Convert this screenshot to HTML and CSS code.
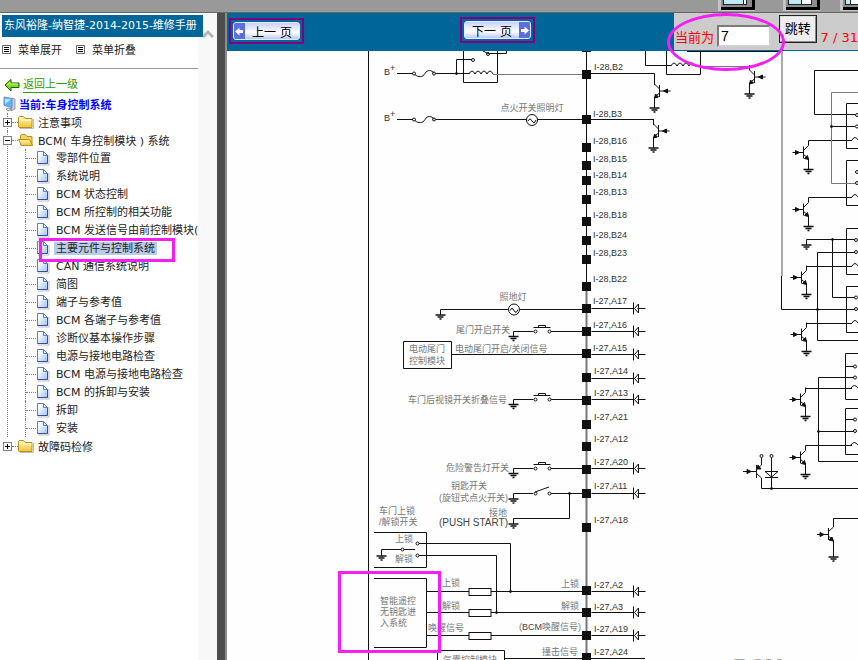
FILE: index.html
```html
<!DOCTYPE html>
<html lang="zh-CN">
<head>
  <meta charset="UTF-8" />
  <meta name="viewport" content="width=device-width, initial-scale=1.0"/>
  <title>东风裕隆-纳智捷-2014-2015-维修手册</title>
  <link rel="stylesheet" href="styles.css">
</head>
<body>
  <!-- shared icons -->
  <svg class="defs" width="0" height="0" aria-hidden="true">
    <defs>
      <linearGradient id="gDoc" x1="0" y1="0" x2="1" y2="1">
        <stop offset="0.2" stop-color="#ffffff"/><stop offset="1" stop-color="#9cc2f2"/>
      </linearGradient>
      <linearGradient id="gFolder" x1="0" y1="0" x2="0" y2="1">
        <stop offset="0" stop-color="#fff6b0"/><stop offset="1" stop-color="#efc43c"/>
      </linearGradient>
      <symbol id="doc" viewBox="0 0 14 16">
        <path d="M2 15h11V5" fill="none" stroke="#b9b9c6"/>
        <path d="M1.500 1.500h6l4 4v8h-10z" fill="url(#gDoc)" stroke="#5a7fc0"/>
        <path d="M11.500 5.500v8h-10" fill="none" stroke="#3c4f96"/>
        <path d="M7.500 1.500v4h4z" fill="#dbe9fb" stroke="#5a7fc0"/>
      </symbol>
      <symbol id="folder" viewBox="0 0 16 14">
        <path d="M2 13.500h13.500V4" fill="none" stroke="#bbb"/>
        <path d="M.5 12V2.500l1-1h4l1.500 2h7v9h-13z" fill="url(#gFolder)" stroke="#b8901c"/>
        <path d="M1.500 5h12" stroke="#fffbe0"/>
      </symbol>
      <symbol id="folderOpen" viewBox="0 0 16 14">
        <path d="M2.500 12V2.500l1-1h4l1.500 2h5v9" fill="#f3d566" stroke="#b8901c"/>
        <path d="M.5 6.500h11l3 6h-11z" fill="url(#gFolder)" stroke="#b8901c"/>
      </symbol>
      <symbol id="list" viewBox="0 0 9 9">
        <path d="M.5.5h8v8h-8z" fill="#fff" stroke="#666"/>
        <path d="M2 2.500h5M2 4.500h5M2 6.500h5" stroke="#000"/>
      </symbol>
    </defs>
  </svg>

  <div class="topbar">
    <svg width="140" height="11" aria-hidden="true">
      <path d="M0 0h37v11H0zM65 0h37v11H65zM122 0h18v11h-18z" fill="#c4c4c4"/>
      <path d="M3 10h34V0h-3v7H3zM68 10h34V0h-3v7H68zM125 10h15V7h-15z" fill="#000"/>
      <path d="M3 0h31v7H3zM68 0h31v7H68zM125 0h15v7h-15z" fill="#8c8c8c"/>
      <path d="M5 0h24v5H5zM70 0h24v5H70zM127 0h13v5h-13z" fill="#222"/>
      <path d="M6 0h19v4H6zM71 0h12v4H71zM128 0h4v4h-4z" fill="#bfeaf5"/>
      <path d="M26 0h2v4h-2zM84 0h9v4h-9zM133 0h7v4h-7z" fill="#fff"/>
    </svg>
  </div>

  <div class="frames">
    <aside class="sidebar">
      <div class="contents">
        <h1>东风裕隆-纳智捷-2014-2015-维修手册</h1>
        <div class="menu">
          <button type="button"><svg width="9" height="9"><use href="#list"/></svg>菜单展开</button>
          <button type="button"><svg width="9" height="9"><use href="#list"/></svg>菜单折叠</button>
        </div>
        <div class="back">
          <svg width="16" height="14" viewBox="0 0 16 14" aria-hidden="true">
            <path d="M1 7l6-5.500v3.500h8v4.500H7V13z" fill="#7ddc1e" stroke="#1b5a0c"/>
            <path d="M3 7l3-2.500V6h8" fill="none" stroke="#e4f96a"/>
          </svg>
          <a href="#up">返回上一级</a>
        </div>
        <div class="current">
          <svg width="13" height="16" viewBox="0 0 13 16" aria-hidden="true">
            <path d="M9 2l3 1v10l-4 2z" fill="#c9ccd6" stroke="#9aa0b2"/>
            <path d="M1 1l8 1.500v9L1 9.500z" fill="#58b4f5" stroke="#6a8fd0"/>
            <path d="M2 2.500l6 1L2 8z" fill="#b9e4ff"/>
            <path d="M3 13l3-1 3 1-4 2z" fill="#dfe2ea" stroke="#8a90a2"/>
          </svg>
          当前:车身控制系统
        </div>

        <ul class="tree">
          <li>
            <div class="row"><button type="button" class="toggle plus" aria-label="展开"></button><svg width="16" height="14"><use href="#folder"/></svg><a href="#n1">注意事项</a></div>
          </li>
          <li>
            <div class="row"><button type="button" class="toggle" aria-label="折叠"></button><svg width="16" height="14"><use href="#folderOpen"/></svg><a href="#n2">BCM( 车身控制模块 ) 系统</a></div>
            <ul>
              <li><svg width="14" height="16"><use href="#doc"/></svg><a href="#p1">零部件位置</a></li>
              <li><svg width="14" height="16"><use href="#doc"/></svg><a href="#p2">系统说明</a></li>
              <li><svg width="14" height="16"><use href="#doc"/></svg><a href="#p3">BCM 状态控制</a></li>
              <li><svg width="14" height="16"><use href="#doc"/></svg><a href="#p4">BCM 所控制的相关功能</a></li>
              <li><svg width="14" height="16"><use href="#doc"/></svg><a href="#p5">BCM 发送信号由前控制模块(</a></li>
              <li class="marked"><svg width="14" height="16"><use href="#doc"/></svg><a href="#p6" class="selected">主要元件与控制系统</a></li>
              <li><svg width="14" height="16"><use href="#doc"/></svg><a href="#p7">CAN 通信系统说明</a></li>
              <li><svg width="14" height="16"><use href="#doc"/></svg><a href="#p8">简图</a></li>
              <li><svg width="14" height="16"><use href="#doc"/></svg><a href="#p9">端子与参考值</a></li>
              <li><svg width="14" height="16"><use href="#doc"/></svg><a href="#p10">BCM 各端子与参考值</a></li>
              <li><svg width="14" height="16"><use href="#doc"/></svg><a href="#p11">诊断仪基本操作步骤</a></li>
              <li><svg width="14" height="16"><use href="#doc"/></svg><a href="#p12">电源与接地电路检查</a></li>
              <li><svg width="14" height="16"><use href="#doc"/></svg><a href="#p13">BCM 电源与接地电路检查</a></li>
              <li><svg width="14" height="16"><use href="#doc"/></svg><a href="#p14">BCM 的拆卸与安装</a></li>
              <li><svg width="14" height="16"><use href="#doc"/></svg><a href="#p15">拆卸</a></li>
              <li><svg width="14" height="16"><use href="#doc"/></svg><a href="#p16">安装</a></li>
            </ul>
          </li>
          <li>
            <div class="row"><button type="button" class="toggle plus" aria-label="展开"></button><svg width="16" height="14"><use href="#folder"/></svg><a href="#n3">故障码检修</a></div>
          </li>
        </ul>
      </div>
      <div class="scroll">
        <svg width="12" height="10" viewBox="0 0 12 10" aria-hidden="true"><path d="M1 8l5-5 5 5" fill="none" stroke="#b4b4b4" stroke-width="3"/></svg>
      </div>
    </aside>

    <div class="divider"></div>

    <main class="viewer">
      <div class="toolbar">
        <div><button type="button" class="page prev"><span class="face"><svg width="11" height="17" viewBox="0 0 11 17" aria-hidden="true"><path d="M0 0h11v17H0z" fill="#5b6fe0"/><path d="M1 8.500l4.500-4v2.500H9v3H5.500v2.500z" fill="#fff"/></svg><span>上一 页</span></span></button></div>
        <div><button type="button" class="page next"><span class="face"><span>下一 页</span><svg width="11" height="17" viewBox="0 0 11 17" aria-hidden="true"><path d="M0 0h11v17H0z" fill="#5b6fe0"/><path d="M10 8.500l-4.500-4v2.500H2v3h3.500v2.500z" fill="#fff"/></svg></span></button></div>
        <form class="jump">
          <label for="pageNo">当前为</label>
          <input type="text" id="pageNo" value="7">
          <button type="button">跳转</button>
          <span class="count">7 / 31</span>
          <span class="circle"></span>
        </form>
      </div>

      <div class="sheet">
        <svg class="diagram" width="631" height="609" viewBox="227 51 631 609" role="img" aria-label="BCM 电路图">
          <defs>
            <rect id="pin" x="-5" y="-5" width="9" height="9" fill="#111" stroke="none"/>
            <g id="gnd"><path d="M-5 0H5M-3 2H3M-1 4H1" stroke-width="1.500"/></g>
            <g id="diode">
              <path d="M5 0H47M51 0H59M47-6V6M52-4.500L48 0l4 4.500z"/>
            </g>
            <!-- base on the left, emitter to ground -->
            <g id="npn">
              <path d="M-11 0H0M0-6V6M0-2L5-7V-12M0 2L5 6V17"/>
              <path d="M-4 0l-4-2v4zM5 7L1 6l3-3z" fill="#111"/>
              <use href="#gnd" x="5" y="17"/>
            </g>
            <g id="fuse">
              <path d="M0 0H16M39 0H57M18 1c3 3 8 3 10-1s7-4 9 0"/>
              <circle cx="17" cy="0" r="1.500"/><circle cx="37" cy="0" r="1.500"/>
            </g>
            <g id="coil"><path d="M0 0q3-6 6 0q3-6 6 0q3-6 6 0q3-6 6 0"/></g>
            <g id="lamp"><circle cx="0" cy="0" r="5.500" fill="#fff"/><path d="M-4 1q2-4 4 0t4-1"/></g>
            <!-- push switch between ground and pin -->
            <g id="push">
              <path d="M0 5V0H20M37 0H69M20-4H37M25-4V-6H32V-4"/>
              <circle cx="22" cy="0" r="1.500" fill="#fff"/><circle cx="36" cy="0" r="1.500" fill="#fff"/>
              <use href="#gnd" x="0" y="5"/>
            </g>
            <g id="resistor"><path d="M0 0H155"/><rect x="42" y="-3" width="22" height="7" fill="#fff"/></g>
          </defs>

          <!-- bus and frame -->
          <g class="wire">
            <path d="M368.500 51V660M586.500 51V290"/>
            <path class="soft" d="M586.500 290V660" stroke-width="2"/>
          </g>

          <!-- power supply -->
          <g class="wire">
            <use href="#fuse" x="397" y="73.500"/>
            <path d="M453 73.500H469M456.500 73V59.500H472M463.500 51V82.500H497.500V51M483 51L488 53.500H506.500V51"/>
            <circle cx="456.500" cy="73.500" r="1" fill="#111"/>
            <circle cx="473" cy="60" r="1.500"/><circle cx="488" cy="54" r="1.500"/>
            <use href="#coil" x="469" y="74"/>
            <path class="soft" d="M493 74.500H582"/>
            <use href="#fuse" x="397" y="119.500"/>
            <path d="M453 119.500H582"/>
            <use href="#lamp" x="532" y="120"/>
            <path d="M591 73.500H654.500V85M591 119.500H653.500V125"/>
            <use href="#npn" transform="translate(659.500 91) scale(-1 1)"/>
            <use href="#npn" transform="translate(658.500 131) scale(-1 1)"/>
            <path d="M645.500 51V65.500H671M666.500 51V74.500H700.500V51M687 51.500H782"/>
            <use href="#coil" x="671" y="66"/>
            <path class="soft" d="M695 66.500H749.500"/>
            <use href="#npn" transform="translate(754.500 77) scale(-1 1)"/>
            <path class="pale" d="M782 51V276" stroke-width="2"/>
            <path d="M781.500 276V309.500H855"/>
          </g>

          <!-- left side switches -->
          <g class="wire">
            <path d="M440.500 315V309.500H582"/><use href="#gnd" x="440.500" y="315"/><use href="#lamp" x="514" y="309.500"/>
            <use href="#push" x="513.500" y="331.500"/>
            <path d="M403.500 341.500H451.500V368.500H403.500zM452 354.500H582"/>
            <use href="#push" x="513.500" y="399.500"/>
            <use href="#push" x="513.500" y="468.500"/>
            <path d="M513.500 499V493.500H533M535 492L549 487M551 493.500H582M513.500 524V518.500H569.500V493"/>
            <circle cx="535.500" cy="493.500" r="1.500"/><circle cx="549.500" cy="493.500" r="1.500"/>
            <circle cx="569.500" cy="493.500" r="1" fill="#111"/>
            <use href="#gnd" x="513.500" y="499"/><use href="#gnd" x="513.500" y="524"/>
            <path d="M374 532.500H426.500V567.500H374M381.500 556V549.500H415M419 543.500H510.500V591M419 555.500H496.500V612"/>
            <circle cx="417.500" cy="543.500" r="1.500"/><circle cx="402.500" cy="549.500" r="1.500" fill="#fff"/><circle cx="417.500" cy="555.500" r="1.500"/>
            <use href="#gnd" x="381.500" y="556"/>
            <path d="M374 578.500H426.500V647.500H374"/>
            <use href="#resistor" x="427" y="591.500"/>
            <use href="#resistor" x="427" y="612.500"/>
            <use href="#resistor" x="427" y="635.500"/>
            <circle cx="510.500" cy="591.500" r="1" fill="#111"/><circle cx="496.500" cy="612.500" r="1" fill="#111"/>
            <path d="M437.500 660V650.500H504.500V660M505 658.500H645"/>
          </g>

          <!-- pins -->
          <g>
            <use href="#pin" x="587" y="48"/><use href="#pin" x="587" y="75"/><use href="#pin" x="587" y="120"/>
            <use href="#pin" x="587" y="148"/><use href="#pin" x="587" y="166"/><use href="#pin" x="587" y="181"/>
            <use href="#pin" x="587" y="200"/><use href="#pin" x="587" y="222"/><use href="#pin" x="587" y="241"/>
            <use href="#pin" x="587" y="260"/><use href="#pin" x="587" y="287"/><use href="#pin" x="587" y="309"/>
            <use href="#pin" x="587" y="332"/><use href="#pin" x="587" y="354"/><use href="#pin" x="587" y="378"/>
            <use href="#pin" x="587" y="401"/><use href="#pin" x="587" y="425"/><use href="#pin" x="587" y="447"/>
            <use href="#pin" x="587" y="470"/><use href="#pin" x="587" y="494"/><use href="#pin" x="587" y="528"/>
            <use href="#pin" x="587" y="591"/><use href="#pin" x="587" y="613"/><use href="#pin" x="587" y="636"/>
            <use href="#pin" x="587" y="658"/>
          </g>
          <g class="wire">
            <use href="#diode" x="586.500" y="308.500"/><use href="#diode" x="586.500" y="331.500"/>
            <use href="#diode" x="586.500" y="354.500"/><use href="#diode" x="586.500" y="378.500"/>
            <use href="#diode" x="586.500" y="399.500"/><use href="#diode" x="586.500" y="468.500"/>
            <use href="#diode" x="586.500" y="493.500"/><use href="#diode" x="586.500" y="591.500"/>
            <use href="#diode" x="586.500" y="612.500"/><use href="#diode" x="586.500" y="635.500"/>
          </g>
          <g class="pins">
            <text x="594" y="70">I-28,B2</text>
            <text x="593" y="117">I-28,B3</text>
            <text x="593" y="144">I-28,B16</text>
            <text x="593" y="162">I-28,B15</text>
            <text x="593" y="178">I-28,B14</text>
            <text x="593" y="195">I-28,B13</text>
            <text x="593" y="218">I-28,B18</text>
            <text x="593" y="238">I-28,B24</text>
            <text x="593" y="256">I-28,B23</text>
            <text x="593" y="282">I-28,B22</text>
            <text x="593" y="304">I-27,A17</text>
            <text x="593" y="328">I-27,A16</text>
            <text x="593" y="351">I-27,A15</text>
            <text x="594" y="374">I-27,A14</text>
            <text x="594" y="396">I-27,A13</text>
            <text x="594" y="420">I-27,A21</text>
            <text x="594" y="442">I-27,A12</text>
            <text x="594" y="465">I-27,A20</text>
            <text x="594" y="489">I-27,A11</text>
            <text x="594" y="523">I-27,A18</text>
            <text x="594" y="588">I-27,A2</text>
            <text x="594" y="610">I-27,A3</text>
            <text x="594" y="632">I-27,A19</text>
            <text x="594" y="655">I-27,A24</text>
            <text x="384" y="75">B<tspan dy="-4">+</tspan></text>
            <text x="384" y="121">B<tspan dy="-4">+</tspan></text>
          </g>

          <g class="names">
            <text x="532" y="111" text-anchor="middle">点火开关照明灯</text>
            <text x="513" y="300" text-anchor="middle">照地灯</text>
            <text x="510" y="333" text-anchor="end">尾门开启开关</text>
            <text x="427" y="352" text-anchor="middle">电动尾门</text>
            <text x="427" y="364" text-anchor="middle">控制模块</text>
            <text x="455" y="352">电动尾门开启/关闭信号</text>
            <text x="507" y="403" text-anchor="end">车门后视镜开关折叠信号</text>
            <text x="509" y="471" text-anchor="end">危险警告灯开关</text>
            <text x="469" y="489" text-anchor="middle">钥匙开关</text>
            <text x="508" y="501" text-anchor="end">(旋钮式点火开关)</text>
            <text x="507" y="516" text-anchor="end">接地</text>
            <text class="strong" x="508" y="526" text-anchor="end">(PUSH START)</text>
            <text x="379" y="514">车门上锁</text>
            <text x="379" y="525">/解锁开关</text>
            <text x="395" y="542">上锁</text>
            <text x="395" y="562">解锁</text>
            <text x="380" y="604">智能遥控</text>
            <text x="380" y="615">无钥匙进</text>
            <text x="380" y="626">入系统</text>
            <text x="442" y="586">上锁</text>
            <text x="442" y="609">解锁</text>
            <text x="428" y="631">唤醒信号</text>
            <text x="579" y="587" text-anchor="end">上锁</text>
            <text x="579" y="609" text-anchor="end">解锁</text>
            <text x="581" y="630" text-anchor="end">(<tspan class="strong">BCM</tspan>唤醒信号)</text>
            <text x="578" y="655" text-anchor="end">撞击信号</text>
            <text x="470" y="663" text-anchor="middle">气囊控制模块</text>
          </g>

          <!-- relays on the right -->
          <g class="wire">
            <path d="M858 70.500H814.500V114.500H855M831.500 126.500H855M858 103.500H846.500V148.500H858M808.500 140.500H852M858 160.500H846.500V205.500H858M808.500 197.500H852"/>
            <path class="soft" d="M858 92.500H831.500V183.500H855"/>
            <path d="M806.500 245V239.500H855M832.500 239.500V297.500H855M855 252.500H817.500V340.500H858M858 228.500H846.500V274.500H858M858 286.500H846.500V332.500H858M806.500 266.500H852M806.500 323.500H852"/>
            <path d="M858 353.500H845.500V399.500H858M845.500 366.500H854M854 377.500H818.500V461.500H858M805.500 388.500H852M858 408.500H845.500V454.500H858M845.500 419.500H854M818.500 431.500H854M805.500 445.500H852"/>
            <path d="M852 140q3-5 6 0M852 197q3-5 6 0M852 266q3-5 6 0M852 323q3-5 6 0M851 388q3-5 7 0M851 445q3-5 7 0"/>
            <g fill="#fff">
              <circle cx="857" cy="115" r="1.500"/><circle cx="857" cy="126.500" r="1.500"/><circle cx="857" cy="172" r="1.500"/><circle cx="857" cy="183" r="1.500"/>
              <circle cx="856" cy="240" r="1.500"/><circle cx="856" cy="252" r="1.500"/><circle cx="856" cy="297.500" r="1.500"/><circle cx="856" cy="309" r="1.500"/>
              <circle cx="855" cy="366.500" r="1.500"/><circle cx="855" cy="377.500" r="1.500"/><circle cx="855" cy="419.500" r="1.500"/><circle cx="855" cy="431" r="1.500"/>
              <circle cx="761.500" cy="456" r="1.500"/><circle cx="771.500" cy="456" r="1.500"/>
            </g>
            <g fill="#111">
              <circle cx="831.500" cy="126.500" r="1"/><circle cx="832.500" cy="239.500" r="1"/><circle cx="817.500" cy="309.500" r="1"/><circle cx="818.500" cy="431.500" r="1"/><circle cx="771.500" cy="488.500" r="1"/>
            </g>
            <use href="#gnd" x="806.500" y="245"/>
            <use href="#npn" x="803.500" y="152.500"/>
            <use href="#npn" x="803.500" y="209.500"/>
            <use href="#npn" x="801.500" y="277.500"/>
            <use href="#npn" x="801.500" y="334.500"/>
            <use href="#npn" x="800.500" y="399.500"/>
            <use href="#npn" x="800.500" y="457.500"/>
            <path d="M743 471.500H756M756.500 465V478M756 470L761.500 465V458M756 473L761.500 478V488.500H858M771.500 458V488M765 471.500H778L771.500 477zM765 477.500H778"/>
            <path d="M751 471.500l-4-2v4zM757 469l4 0-3-4z" fill="#111"/>
            <path d="M858 518.500H833.500V523M833.500 551V557"/>
            <path d="M817 534.500H828M828.500 528V540M828 532L833.500 527V522M828 536L833.500 540V557"/>
            <path d="M824 534.500l-4-2v4zM833 541l-4-1 3-3z" fill="#111"/>
            <use href="#gnd" x="833.500" y="557"/>
          </g>

          <text class="module" x="733" y="674">BCM</text>
          <rect class="mark" x="339.500" y="572.500" width="100" height="79"/>
        </svg>
      </div>
    </main>
  </div>
</body>
</html>
```
FILE: styles.css
```css
*, *::before, *::after {
  box-sizing: border-box;
}

body {
  margin: 0;
  height: 100vh;
  display: flex;
  flex-direction: column;
  overflow: hidden;
  background: #999999;
  font-family: "DejaVu Sans", "Noto Sans CJK SC", sans-serif;
  font-size: 11px;
  color: #222222;
}

button {
  font: inherit;
  color: inherit;
  padding: 0;
  cursor: pointer;
}

a {
  color: inherit;
  text-decoration: none;
}

svg {
  flex: none;
  display: block;
}

.defs {
  position: absolute;
}

.topbar {
  height: 12px;
  flex: none;
  display: flex;
  justify-content: flex-end;
}

.frames {
  flex: 1;
  min-height: 0;
  display: flex;
  border-top: 1px solid #666666;
}

/* sidebar */
.sidebar {
  width: 217px;
  flex: none;
  display: flex;
  background: #ffffff;
}

.contents {
  width: 198px;
  flex: none;
}

h1 {
  position: relative;
  margin: 2px -5px 0 2px;
  padding-left: 2px;
  background: #006699;
  color: #ffffff;
  font-size: 11px;
  font-weight: normal;
  line-height: 22px;
  white-space: nowrap;
}

.menu {
  display: flex;
  gap: 14px;
  padding: 0 0 7px 2px;
  border-bottom: 1px solid #999999;
}

.menu button {
  display: flex;
  align-items: center;
  gap: 7px;
  height: 24px;
  border: none;
  background: none;
}

.back, .current {
  display: flex;
  align-items: center;
  height: 18px;
}

.back {
  margin-top: 7px;
  padding-left: 4px;
  gap: 3px;
}

.back a {
  color: #339900;
  line-height: 14px;
  border-bottom: 1px solid #339900;
}

.current {
  margin-top: 1px;
  padding-left: 3px;
  gap: 3px;
  color: #0000ff;
  font-weight: bold;
}

.tree, .tree ul {
  list-style: none;
  margin: 0;
  padding: 0;
}

.tree > li {
  margin-left: 7px;
  border-left: 1px dotted #808080;
}

.tree > li:last-child {
  border-left-color: transparent;
}

.row {
  display: flex;
  align-items: center;
  height: 18px;
  margin-left: -5px;
  white-space: nowrap;
}

.row::after {
  content: "";
  order: 1;
  width: 6px;
  border-top: 1px dotted #808080;
}

.row svg {
  order: 2;
}

.row a {
  order: 3;
  padding-left: 4px;
}

.toggle {
  width: 9px;
  height: 9px;
  border: 1px solid #808080;
  background: linear-gradient(#000000, #000000) center / 5px 1px no-repeat #ffffff;
}

.toggle.plus {
  background: linear-gradient(#000000, #000000) center / 5px 1px no-repeat,
    linear-gradient(#000000, #000000) center / 1px 5px no-repeat #ffffff;
}

.tree ul {
  margin-left: 17px;
}

.tree ul li {
  position: relative;
  display: flex;
  align-items: center;
  height: 18px;
  border-left: 1px dotted #808080;
  white-space: nowrap;
}

.tree ul li::before {
  content: "";
  width: 10px;
  flex: none;
  border-top: 1px dotted #808080;
}

.tree ul li a {
  min-width: 0;
  margin-left: 4px;
  padding: 0 2px;
  line-height: 13px;
  overflow: hidden;
}

.tree ul .selected {
  background: #b8cce8;
}

.tree ul .marked::after {
  content: "";
  position: absolute;
  z-index: 1;
  left: 13px;
  top: -1px;
  width: 136px;
  height: 24px;
  border: 3px solid #f51ef5;
}

.scroll {
  flex: 1;
  padding: 16px 0 0 4px;
  background: #f8f8f8;
}

.divider {
  width: 10px;
  flex: none;
  background: #4d4d4d;
  border-right: 2px solid #8c8c8c;
}

/* viewer */
.viewer {
  flex: 1;
  min-width: 0;
  display: flex;
  flex-direction: column;
  background: #fefefe;
}

.toolbar {
  position: relative;
  z-index: 1;
  flex: none;
  display: grid;
  grid-template-columns: 1fr 214px 184px;
  height: 38px;
  padding-bottom: 1px;
  background: #006699;
}

.page {
  margin: 5px 0 0 2px;
  padding: 2px;
  border: 2px solid #800080;
  background: #006699;
}

.next {
  margin: 4px 0 0;
}

.face {
  display: flex;
  align-items: center;
  width: 67px;
  height: 18px;
  overflow: hidden;
  border: 1px solid #e6e9ff;
  border-radius: 3px;
  background: linear-gradient(#c9d0fa, #ffffff 60%, #bcc5f5);
  color: #000000;
  font-size: 12px;
}

.face span {
  flex: 1;
  text-align: center;
  white-space: nowrap;
}

.jump {
  position: relative;
  display: flex;
  align-items: flex-start;
  padding-left: 1px;
  background: #cccccc;
  color: #ff0000;
  font-size: 13px;
  line-height: 16px;
  white-space: nowrap;
}

.jump label, .count {
  padding-top: 17px;
}

.jump input {
  width: 54px;
  height: 22px;
  margin: 12px 8px 0 3px;
  padding: 0 2px;
  border: 2px inset #d0d0d0;
  background: #ffffff;
  font-family: "Liberation Sans", sans-serif;
  font-size: 14px;
}

.jump button {
  width: 39px;
  height: 28px;
  margin: 2px 4px 0 0;
  border: 2px outset #dddddd;
  outline: 1px solid #222222;
  outline-offset: -1px;
  background: #eeeeee;
  color: #000000;
}

.circle {
  position: absolute;
  left: -7px;
  top: 0;
  width: 118px;
  height: 58px;
  border: 3px solid #f51ef5;
  border-radius: 50%;
  pointer-events: none;
}

.sheet {
  flex: 1;
  min-height: 0;
  overflow: hidden;
}

/* circuit diagram */
.wire {
  fill: none;
  stroke: #111111;
}

.wire .soft {
  stroke: #777777;
}

.wire .pale {
  stroke: #aaaaaa;
}

.diagram text {
  font-family: "Liberation Sans", "Noto Sans CJK SC", sans-serif;
  font-size: 9px;
}

.pins {
  fill: #333333;
}

.names {
  fill: #777777;
}

.names .strong {
  fill: #444444;
}

.diagram .module {
  fill: #aaaaaa;
  font-size: 22px;
  font-weight: bold;
}

.diagram text.strong {
  font-size: 10px;
}

.mark {
  fill: none;
  stroke: #f51ef5;
  stroke-width: 3;
}
```
